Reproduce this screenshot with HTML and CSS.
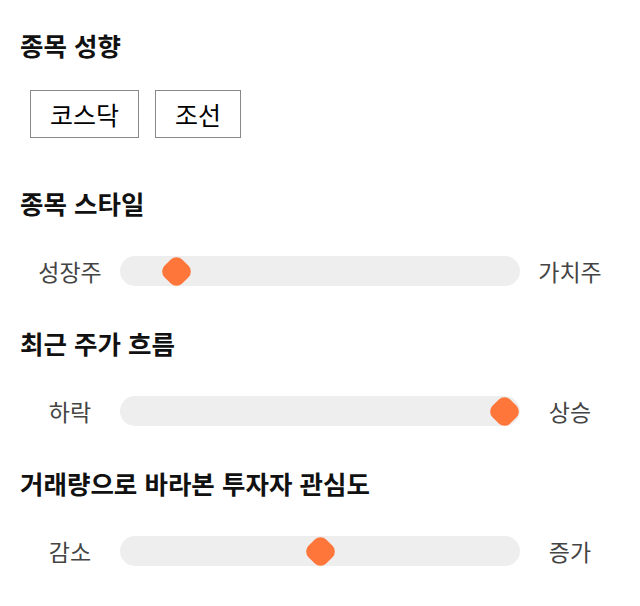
FILE: index.html
```html
<!DOCTYPE html>
<html lang="ko">
<head>
    <meta charset="UTF-8">
    <meta name="viewport" content="width=device-width, initial-scale=1.0">
    <title>종목 필터</title>
    <link rel="stylesheet" href="styles.css">
</head>
<body>
    <div class="filter-panel">
        <section class="filter-section">
            <h3>종목 성향</h3>
            <div class="tag-list">
                <button class="tag">코스닥</button>
                <button class="tag">조선</button>
            </div>
        </section>

        <section class="filter-section">
            <h3>종목 스타일</h3>
            <div class="range-row">
                <span class="range-label">성장주</span>
                <div class="range-track">
                    <span class="range-thumb" style="left: 14%"></span>
                </div>
                <span class="range-label">가치주</span>
            </div>
        </section>

        <section class="filter-section">
            <h3>최근 주가 흐름</h3>
            <div class="range-row">
                <span class="range-label">하락</span>
                <div class="range-track">
                    <span class="range-thumb" style="left: 96%"></span>
                </div>
                <span class="range-label">상승</span>
            </div>
        </section>

        <section class="filter-section">
            <h3>거래량으로 바라본 투자자 관심도</h3>
            <div class="range-row">
                <span class="range-label">감소</span>
                <div class="range-track">
                    <span class="range-thumb" style="left: 50%"></span>
                </div>
                <span class="range-label">증가</span>
            </div>
        </section>
    </div>
</body>
</html>
```

FILE: styles.css
```css
body {
    margin: 0;
    background: #ffffff;
    font-family: "Noto Sans CJK KR", "Noto Sans", sans-serif;
    color: #000;
}
.filter-panel {
    padding: 20px;
    display: flex;
    flex-direction: column;
}
.filter-section h3 {
    margin: 0;
    font-size: 25.5px;
    font-weight: bold;
    line-height: 50px;
    color: #111;
}
.tag-list {
    display: flex;
    gap: 16px;
    padding: 20px 10px 40px;
}
.tag {
    font-family: inherit;
    font-size: 25px;
    line-height: 1;
    color: #000;
    background: #fff;
    border: 1px solid #888;
    border-radius: 0;
    padding: 0 19px;
    height: 48px;
}
.range-row {
    display: flex;
    align-items: center;
    height: 60px;
    margin: 13px 0 17px;
}
.range-label {
    width: 100px;
    text-align: center;
    font-size: 23px;
    color: #444;
}
.range-track {
    flex: 1;
    position: relative;
    height: 30px;
    background: #eeeeee;
    border-radius: 15px;
}
.range-thumb {
    position: absolute;
    top: 50%;
    width: 25px;
    height: 25px;
    margin: -12.5px 0 0 -12.5px;
    background: #ff763b;
    border-radius: 8px;
    transform: rotate(45deg);
}
```
